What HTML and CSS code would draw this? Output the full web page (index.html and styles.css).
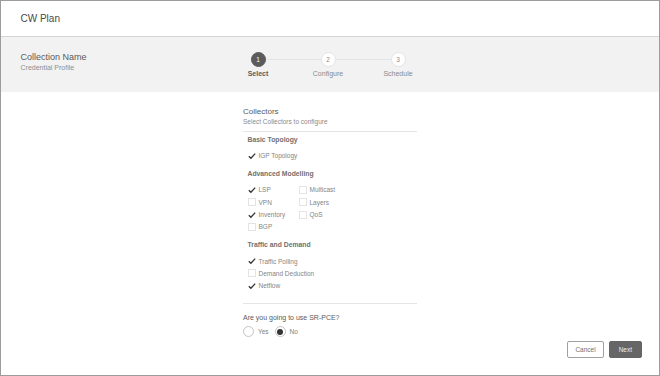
FILE: index.html
```html
<!DOCTYPE html>
<html lang="en">
<head>
    <meta charset="UTF-8">
    <meta name="viewport" content="width=device-width, initial-scale=1.0">
    <title>CW Plan</title>
    <link rel="stylesheet" href="styles.css">
</head>
<body>
    <div class="frame">
        <header class="top-bar">CW Plan</header>

        <section class="wizard-bar">
            <div class="wizard-title">
                <div class="name">Collection Name</div>
                <div class="profile">Credential Profile</div>
            </div>
            <ol class="steps">
                <li class="step active"><span class="dot">1</span><span class="label">Select</span></li>
                <li class="step"><span class="dot">2</span><span class="label">Configure</span></li>
                <li class="step"><span class="dot">3</span><span class="label">Schedule</span></li>
            </ol>
        </section>

        <main class="content">
            <div class="panel">
                <div class="panel-head">
                    <h2>Collectors</h2>
                    <p>Select Collectors to configure</p>
                </div>

                <div class="groups">
                    <div class="group">
                        <h3>Basic Topology</h3>
                        <label class="check on"><span class="box"><svg viewBox="0 0 8 8"><polyline points="0.8,4.3 2.9,6.3 7.2,1.6"/></svg></span>IGP Topology</label>
                    </div>

                    <div class="group">
                        <h3>Advanced Modelling</h3>
                        <div class="two-col">
                            <label class="check on"><span class="box"><svg viewBox="0 0 8 8"><polyline points="0.8,4.3 2.9,6.3 7.2,1.6"/></svg></span>LSP</label>
                            <label class="check"><span class="box"></span>Multicast</label>
                            <label class="check"><span class="box"></span>VPN</label>
                            <label class="check"><span class="box"></span>Layers</label>
                            <label class="check on"><span class="box"><svg viewBox="0 0 8 8"><polyline points="0.8,4.3 2.9,6.3 7.2,1.6"/></svg></span>Inventory</label>
                            <label class="check"><span class="box"></span>QoS</label>
                            <label class="check"><span class="box"></span>BGP</label>
                        </div>
                    </div>

                    <div class="group">
                        <h3>Traffic and Demand</h3>
                        <label class="check on"><span class="box"><svg viewBox="0 0 8 8"><polyline points="0.8,4.3 2.9,6.3 7.2,1.6"/></svg></span>Traffic Polling</label>
                        <label class="check"><span class="box"></span>Demand Deduction</label>
                        <label class="check on"><span class="box"><svg viewBox="0 0 8 8"><polyline points="0.8,4.3 2.9,6.3 7.2,1.6"/></svg></span>Netflow</label>
                    </div>
                </div>

                <div class="question">
                    <p>Are you going to use SR-PCE?</p>
                    <div class="radios">
                        <label class="radio"><span class="ring"></span>Yes</label>
                        <label class="radio on"><span class="ring"></span>No</label>
                    </div>
                </div>
            </div>
        </main>

        <footer class="actions">
            <button class="btn">Cancel</button>
            <button class="btn primary">Next</button>
        </footer>
    </div>
</body>
</html>
```

FILE: styles.css
```css
* {
    box-sizing: border-box;
}

body {
    margin: 0;
    font-family: "Liberation Sans", Arial, sans-serif;
    color: #555;
    background: #fff;
}

.frame {
    width: 660px;
    height: 376px;
    border: 1px solid #9c9c9c;
    display: flex;
    flex-direction: column;
}

.top-bar {
    height: 36px;
    padding-left: 19.5px;
    border-bottom: 1px solid #d4d4d4;
    font-size: 10px;
    line-height: 35px;
    color: #4a4a4a;
}

/* wizard band */
.wizard-bar {
    height: 55px;
    background-color: #f2f2f2;
    display: flex;
    padding: 14.5px 0 0 19.5px;
}

.wizard-title {
    width: 202.5px;
}

.wizard-title .name {
    font-size: 9px;
    line-height: 11px;
    color: #5a5a5a;
}

.wizard-title .profile {
    font-size: 7px;
    line-height: 10px;
    color: #8e8e8e;
}

.steps {
    list-style: none;
    margin: 0;
    padding: 0;
    display: flex;
}

.step {
    position: relative;
    width: 70px;
    display: flex;
    flex-direction: column;
    align-items: center;
}

.step:not(:last-child)::after {
    content: "";
    position: absolute;
    top: 7px;
    left: 43px;
    width: 55px;
    height: 1.5px;
    background-color: #e4e4e4;
}

.dot {
    width: 15px;
    height: 15px;
    border-radius: 50%;
    border: 1px solid #e4e4e4;
    background: #fff;
    color: #8a8a8a;
    font-size: 6.5px;
    display: flex;
    align-items: center;
    justify-content: center;
}

.step .label {
    margin-top: 2.5px;
    font-size: 7px;
    line-height: 10px;
    color: #8a8a8a;
}

.step.active .dot {
    background-color: #5b5b5b;
    border-color: #5b5b5b;
    color: #fff;
}

.step.active .label {
    color: #5a5a5a;
    font-weight: bold;
}

/* collectors panel */
.content {
    flex: 1;
    display: flex;
    justify-content: center;
    padding-top: 13.5px;
}

.panel {
    width: 174px;
}

.panel-head {
    padding-bottom: 5px;
    border-bottom: 1px solid #e4e4e4;
}

.panel-head h2 {
    margin: 0;
    font-size: 8px;
    line-height: 11px;
    font-weight: normal;
    color: #5a5a5a;
}

.panel-head p {
    margin: 0;
    font-size: 6.5px;
    line-height: 9px;
    color: #8a8a8a;
}

.groups {
    padding: 2px 0 11px 4.5px;
    border-bottom: 1px solid #e4e4e4;
}

.group + .group {
    margin-top: 6px;
}

.group h3 {
    margin: 0 0 4px;
    font-size: 6.8px;
    line-height: 12px;
    font-weight: bold;
    color: #707070;
}

.two-col {
    display: grid;
    grid-template-columns: 51px auto;
}

.check {
    display: flex;
    align-items: center;
    height: 12.3px;
    font-size: 6.5px;
    color: #858585;
}

.box {
    width: 8px;
    height: 8px;
    margin-right: 3px;
    border: 1px solid #e4e4e4;
    display: flex;
}

.check.on .box {
    border-color: transparent;
}

.box svg {
    width: 8px;
    height: 8px;
    margin: -1px;
    overflow: visible;
}

.box polyline {
    fill: none;
    stroke: #333;
    stroke-width: 1.3;
}

.question p {
    margin: 8px 0 0;
    font-size: 7px;
    line-height: 12px;
    color: #5a5a5a;
}

.radios {
    display: flex;
    gap: 6px;
    margin-top: 1px;
}

.radio {
    display: flex;
    align-items: center;
    height: 14px;
    font-size: 6.5px;
    color: #808080;
}

.ring {
    width: 11px;
    height: 11px;
    border-radius: 50%;
    border: 1px solid #c4c4c4;
    background: #fff;
    margin-right: 4px;
    display: flex;
    align-items: center;
    justify-content: center;
}

.radio.on .ring::after {
    content: "";
    width: 6px;
    height: 6px;
    border-radius: 50%;
    background-color: #333;
}

/* footer buttons */
.actions {
    display: flex;
    justify-content: flex-end;
    gap: 5px;
    padding: 0 17px 17px 0;
}

.btn {
    height: 17px;
    padding: 0 7px;
    font-family: inherit;
    font-size: 6.5px;
    color: #707070;
    background: #fff;
    border: 1px solid #a0a0a0;
    border-radius: 2px;
}

.btn.primary {
    background-color: #666;
    border-color: #666;
    color: #eee;
    padding: 0 9px;
}
```
